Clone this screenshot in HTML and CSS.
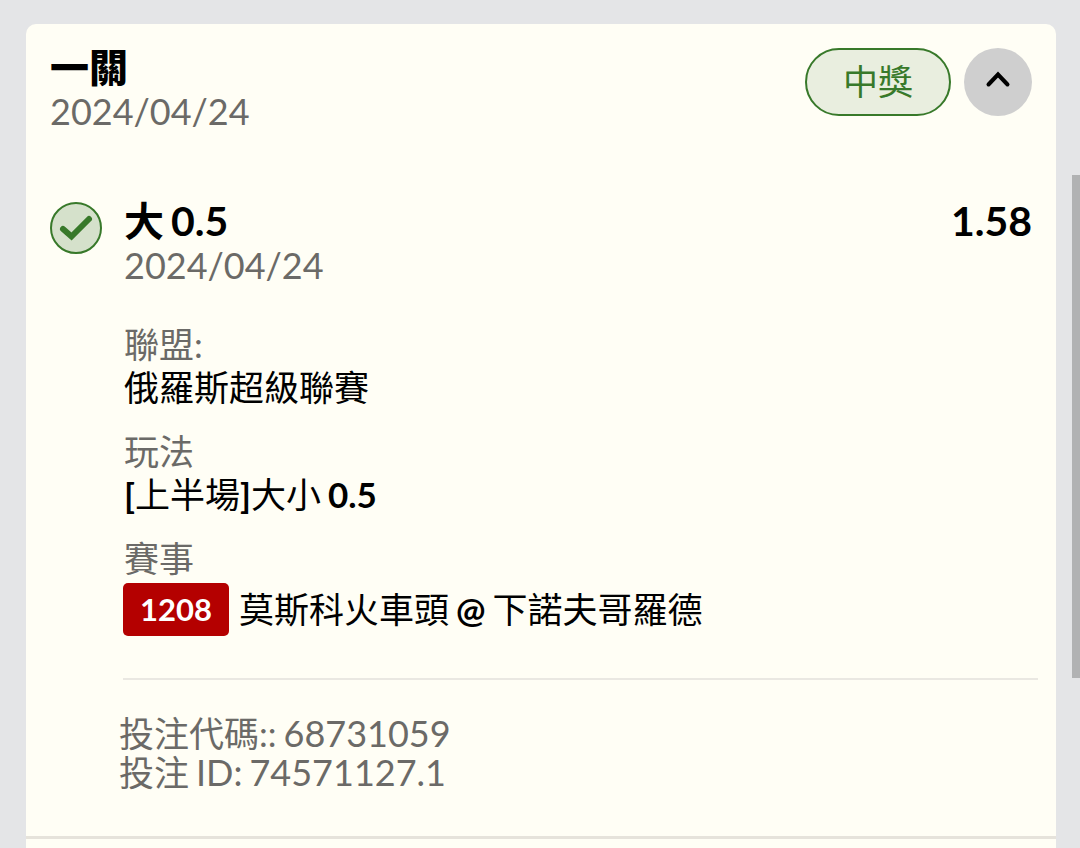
FILE: index.html
```html
<!DOCTYPE html>
<html lang="zh-Hant">
<head>
  <meta charset="utf-8">
  <meta name="viewport" content="width=device-width, initial-scale=1">
  <title>投注紀錄</title>
  <link rel="stylesheet" href="styles.css">
</head>
<body>
  <main class="card">
    <article class="ticket">
      <header class="ticket-header">
        <div>
          <h1 class="ticket-title">一關</h1>
          <time class="date" datetime="2024-04-24">2024/04/24</time>
        </div>
        <div class="ticket-actions">
          <span class="status">中獎</span>
          <button class="toggle" type="button" aria-label="收合" aria-expanded="true">
            <svg class="toggle-icon" viewBox="0 0 28 20" aria-hidden="true">
              <path d="M4.500 14.500 L14 4.500 L23.500 14.500"/>
            </svg>
          </button>
        </div>
      </header>

      <section class="bet">
        <svg class="won-icon" viewBox="0 0 52 52" aria-hidden="true">
          <circle cx="26" cy="26" r="25"/>
          <path d="M13 27 L21.500 34.500 L39 17"/>
        </svg>
        <div class="bet-body">
          <div class="bet-heading">
            <h2 class="bet-title"><span>大</span> <span class="odds">0.5</span></h2>
            <span class="odds">1.58</span>
          </div>
          <time class="date" datetime="2024-04-24">2024/04/24</time>
          <dl class="details">
            <div>
              <dt>聯盟:</dt>
              <dd>俄羅斯超級聯賽</dd>
            </div>
            <div>
              <dt>玩法</dt>
              <dd class="phrase"><span><span class="latin">[</span>上半場<span class="latin">]</span>大小</span> <b>0.5</b></dd>
            </div>
            <div>
              <dt>賽事</dt>
              <dd class="match">
                <span class="match-code">1208</span>
                <span class="phrase"><span>莫斯科火車頭</span> <span class="latin">@</span> <span>下諾夫哥羅德</span></span>
              </dd>
            </div>
          </dl>
        </div>
      </section>

      <footer class="references">
        <p class="phrase"><span>投注代碼::</span> <span class="number">68731059</span></p>
        <p class="phrase"><span>投注</span> <span class="number">ID:</span> <span class="number">74571127.1</span></p>
      </footer>
    </article>
  </main>
  <div class="scroll-thumb" aria-hidden="true"></div>
</body>
</html>
```
FILE: styles.css
```css
* {
  box-sizing: border-box;
}

body {
  display: flex;
  min-height: 100vh;
  margin: 0;
  padding: 24px 24px 0 26px;
  background: #e4e5e7;
  color: #000;
  font-family: Lato, "Noto Sans CJK TC", sans-serif;
  font-size: 35px;
}

h1, h2, dl, dd, p {
  margin: 0;
}

.card {
  flex: 1;
  border-radius: 10px 10px 0 0;
  background: #fffef5;
}

.ticket {
  padding: 24px 24px 44px;
  border-bottom: 3px solid #e6e3db;
}

.ticket-header,
.bet-heading {
  display: flex;
  justify-content: space-between;
}

.ticket-title {
  margin-bottom: 4px;
  font-size: 39px;
  font-weight: 900;
  line-height: 38px;
}

.date {
  display: block;
  color: #6b6a67;
  font-size: 36px;
  line-height: 42px;
}

.ticket-actions {
  display: flex;
  gap: 13px;
}

.status {
  display: flex;
  align-items: center;
  height: 68px;
  padding: 0 36px 5px;
  border: 2px solid #38792a;
  border-radius: 34px;
  background: #e9eedf;
  color: #38792a;
}

.toggle {
  display: flex;
  align-items: center;
  justify-content: center;
  width: 68px;
  height: 68px;
  padding: 0 0 4px;
  border: 0;
  border-radius: 50%;
  background: #cfcfcf;
}

.toggle-icon {
  width: 28px;
  height: 20px;
  fill: none;
  stroke: #000;
  stroke-width: 4;
  stroke-linecap: round;
}

.bet {
  display: flex;
  gap: 22px;
  margin-top: 70px;
}

.won-icon {
  flex: none;
  width: 52px;
  height: 52px;
  fill: #d5e1cb;
  stroke: #38792a;
  stroke-width: 2;
}

.won-icon path {
  fill: none;
  stroke-width: 6;
  stroke-linecap: round;
}

.bet-body {
  flex: 1;
}

.bet-heading {
  margin-bottom: 4px;
  line-height: 38px;
}

.bet-title {
  display: flex;
  gap: 7px;
  font-size: 40px;
}

.odds {
  font-size: 41px;
  font-weight: 700;
}

.details {
  display: grid;
  gap: 21px;
  margin-top: 37px;
  line-height: 43px;
}

dt {
  color: #6b6a67;
}

.phrase {
  display: flex;
  gap: 7px;
}

.latin {
  font-weight: 700;
}

.match {
  display: flex;
  align-items: center;
  gap: 10px;
  margin: 3px 0 0 -1px;
}

.match-code {
  padding: 0 17px;
  border-radius: 5px;
  background: #b40000;
  color: #fff;
  font-size: 31px;
  font-weight: 700;
  line-height: 53px;
}

.references {
  margin: 42px -6px 0 73px;
  padding-top: 34px;
  border-top: 2px solid #eae8e2;
  color: #6b6a67;
  line-height: 39px;
}

.references p {
  margin-left: -4px;
}

.number {
  font-size: 36px;
}

.scroll-thumb {
  position: absolute;
  top: 175px;
  right: 0;
  width: 8px;
  height: 503px;
  background: #b1b2b3;
}
```
